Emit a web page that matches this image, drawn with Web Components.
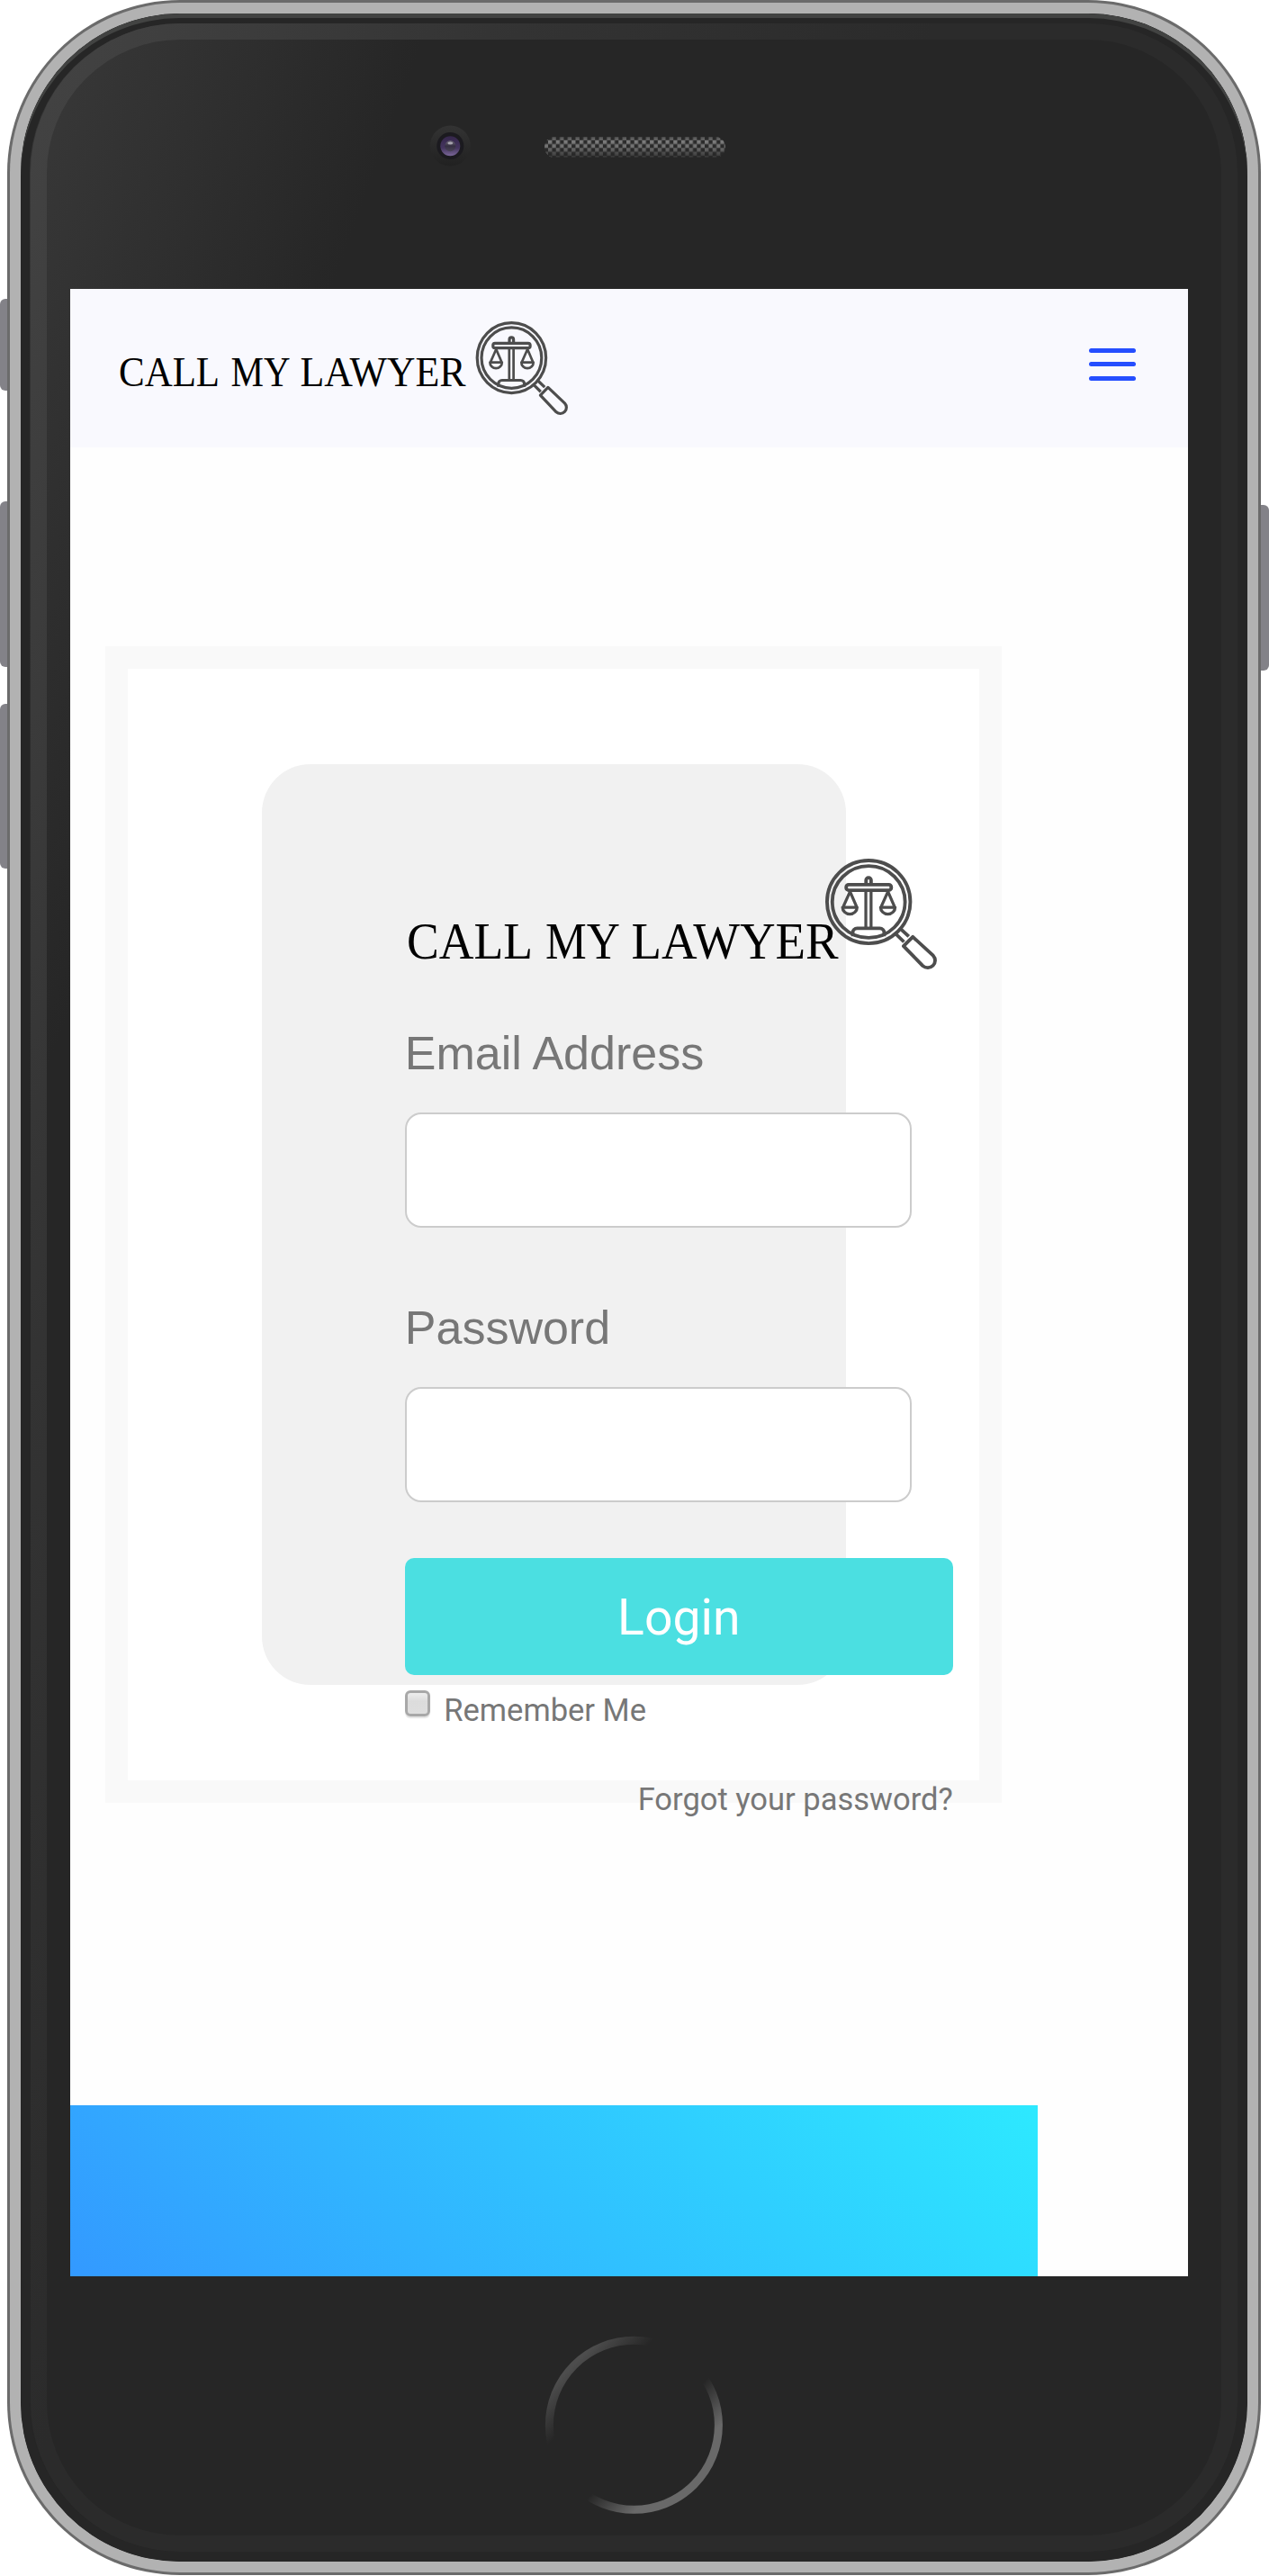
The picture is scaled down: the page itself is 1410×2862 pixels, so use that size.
<!DOCTYPE html>
<html lang="en">
<head>
<meta charset="utf-8">
<title>Call My Lawyer</title>
<style>
  html, body { margin: 0; background: #fff; }
  body { width: 1410px; height: 2862px; overflow: hidden; }
</style>
</head>
<body>
<phone-device>
  <app-header></app-header>
  <login-panel>
    <brand-logo size="large"></brand-logo>
    <text-field>Email Address</text-field>
    <text-field>Password</text-field>
    <login-button>Login</login-button>
    <remember-me>Remember Me</remember-me>
    <forgot-link>Forgot your password?</forgot-link>
  </login-panel>
  <page-footer></page-footer>
</phone-device>

<script>
const define = (name, html, setup) => {
  const tpl = document.createElement('template');
  tpl.innerHTML = html;
  customElements.define(name, class extends HTMLElement {
    constructor() {
      super();
      this.attachShadow({ mode: 'open' }).append(tpl.content.cloneNode(true));
    }
    connectedCallback() { if (setup) setup(this); }
  });
};

define('phone-device', `
<style>
  :host { display: block; position: relative; box-sizing: border-box; width: 1410px; height: 2861px; padding: 0 9px 0 8px; }
  .key { position: absolute; width: 20px; background: #838288; border-radius: 6px; }
  .edge { position: relative; box-sizing: border-box; height: 2861px; padding: 3px; border-radius: 192px; background: #6b6b6b; }
  .metal { box-sizing: border-box; height: 100%; padding: 12px; border-radius: 189px; background: #b2b2b2; }
  .glass { position: relative; box-sizing: border-box; height: 100%; border-radius: 177px; display: flex; flex-direction: column; align-items: flex-start;
    background: linear-gradient(110deg, #3a3a3a 0, #262626 430px); overflow: hidden; }
  .rim { position: absolute; inset: 0; border: solid #262626; border-width: 11px 11px 11px 10px; border-radius: 177px; box-sizing: border-box; }
  .ring { position: absolute; left: 0; top: 0; }
  .shine { position: absolute; inset: 0; border-radius: 177px; box-shadow: inset 0 5px 0 #424342; }
  svg { display: block; position: relative; }
  .screen { position: relative; width: 1242px; height: 2208px; margin-left: 55px; background: #fefefe; overflow: hidden; display: flex; flex-direction: column; flex: none; }
</style>
<div class="key" style="left:0;top:332px;height:102px"></div>
<div class="key" style="left:0;top:557px;height:184px"></div>
<div class="key" style="left:0;top:782px;height:183px"></div>
<div class="key" style="right:0;top:561px;height:184px"></div>
<div class="edge"><div class="metal"><div class="glass">
  <div class="rim"></div>
  <svg class="ring" width="1363" height="2831">
    <defs><linearGradient id="rg" gradientUnits="userSpaceOnUse" x1="0" y1="0" x2="900" y2="330">
      <stop offset="0" stop-color="#444"/><stop offset=".55" stop-color="#333"/><stop offset="1" stop-color="#2b2b2b"/></linearGradient></defs>
    <rect x="20" y="20" width="1323" height="2791" rx="157" fill="none" stroke="url(#rg)" stroke-width="18"/>
  </svg>
  <div class="shine"></div>
  <svg width="1363" height="306">
    <defs>
      <linearGradient id="cam" x1="0" y1="0" x2="0" y2="1"><stop offset="0" stop-color="#333"/><stop offset="1" stop-color="#212121"/></linearGradient>
      <linearGradient id="lens" x1="0" y1="0" x2="0" y2="1"><stop offset="0" stop-color="#35264b"/><stop offset=".6" stop-color="#45355f"/><stop offset="1" stop-color="#7a6798"/></linearGradient>
      <linearGradient id="core" x1="0" y1="0" x2="0" y2="1"><stop offset="0" stop-color="#6e6a78"/><stop offset=".5" stop-color="#352f42"/><stop offset="1" stop-color="#4b4458"/></linearGradient>
      <pattern id="mesh" patternUnits="userSpaceOnUse" x="586" y="140.7" width="8.7" height="8.7">
        <rect width="4.35" height="4.35" fill="#7c7c7c"/><rect x="4.35" y="4.35" width="4.35" height="4.35" fill="#7c7c7c"/>
      </pattern>
      <linearGradient id="fade" x1="0" y1="0" x2="0" y2="1"><stop offset="0" stop-color="#262626" stop-opacity=".6"/><stop offset=".2" stop-color="#262626" stop-opacity="0"/><stop offset=".5" stop-color="#262626" stop-opacity=".15"/><stop offset="1" stop-color="#262626" stop-opacity=".85"/></linearGradient>
    </defs>
    <circle cx="477.3" cy="147" r="22.5" fill="url(#cam)"/>
    <circle cx="477.3" cy="147" r="15" fill="#1b1a1f"/>
    <circle cx="477.3" cy="147.2" r="11" fill="url(#lens)"/>
    <circle cx="477.3" cy="147.2" r="6" fill="url(#core)"/>
    <ellipse cx="477.3" cy="144" rx="2.9" ry="1.5" fill="#a9a5b0"/>
    <rect x="582" y="137" width="201" height="23" rx="11.5" fill="#2b2b2b"/>
    <rect x="582" y="137" width="201" height="23" rx="11.5" fill="url(#mesh)"/>
    <rect x="582" y="137" width="201" height="23" rx="11.5" fill="url(#fade)"/>
  </svg>
  <div class="screen"><slot></slot></div>
  <svg width="1363" height="316">
    <defs><linearGradient id="home" gradientUnits="userSpaceOnUse" x1="614.5" y1="98.5" x2="748.5" y2="232.5">
      <stop offset="0" stop-color="#4d4d4d"/><stop offset=".225" stop-color="#4d4d4d" stop-opacity="0"/>
      <stop offset=".61" stop-color="#696969" stop-opacity="0"/><stop offset=".86" stop-color="#696969"/></linearGradient></defs>
    <circle cx="681.4" cy="165.3" r="94" fill="none" stroke="url(#home)" stroke-width="9"/>
  </svg>
</div></div></div>
`);

define('brand-logo', `
<style>
  :host { display: block; line-height: 0; }
  :host([size="large"]) { margin-left: 3.5px; }
  svg { display: block; overflow: visible; }
  text { font-family: "Liberation Serif", serif; fill: #000; }
</style>
<svg class="logo">
  <text><tspan>CALL</tspan> <tspan>MY</tspan> <tspan>LAWYER</tspan></text>
  <svg class="mark" viewBox="0 0 102 104.5" preserveAspectRatio="none" fill="none" stroke="#4d4d4d" stroke-width="3.2" stroke-linejoin="round">
    <ellipse cx="39.8" cy="40.7" rx="38.2" ry="39"/>
    <ellipse cx="39.8" cy="40.7" rx="33.4" ry="33.8"/>
    <path d="M37.4 24V20.4a2.3 2.5 0 0 1 4.6 0V24"/>
    <rect x="19.2" y="24.4" width="41.3" height="5.3" rx="2.2"/>
    <path d="M37.2 30V65M42 30V65" stroke-width="2.7"/>
    <path d="M25.2 73V69.6a4 4 0 0 1 4-4H50a4 4 0 0 1 4 4V73"/>
    <path d="M22.7 31L16.2 45.8M22.7 31L29 45.8M15.8 45.8H29.2a6.7 6.5 0 0 1-13.4 0Z" stroke-width="2.7"/>
    <path d="M57.5 31L51 45.8M57.5 31L63.8 45.8M50.7 45.8H64.1a6.7 6.5 0 0 1-13.4 0Z" stroke-width="2.7"/>
    <path d="M69.4 66.4L76.6 73.2M64.8 71L72.2 78.4"/>
    <path d="M80.3 73.6L71.8 82.3L89.5 101A6.8 6.8 0 0 0 99 91.3Z"/>
  </svg>
</svg>
`, el => {
  const large = el.getAttribute('size') === 'large';
  const m = large
    ? { w: 588, h: 123.3, font: 57, base: 110.6, words: [[-1, 138], [153, 81], [248.5, 230]], x: 464, mw: 123.5 }
    : { w: 498, h: 104.3, font: 45.5, base: 72.3, words: [[-1, 110.5], [123.5, 64.5], [200.5, 184]], x: 395.6, mw: 102 };
  const root = el.shadowRoot;
  const set = (n, o) => Object.entries(o).forEach(([k, v]) => n.setAttribute(k, v));
  set(root.querySelector('.logo'), { width: m.w, height: m.h });
  set(root.querySelector('.mark'), { x: m.x, y: 0, width: m.mw, height: m.h });
  set(root.querySelector('text'), { y: m.base, 'font-size': m.font });
  root.querySelectorAll('tspan').forEach((t, i) =>
    set(t, { x: m.words[i][0], textLength: m.words[i][1], lengthAdjust: 'spacingAndGlyphs' }));
});

define('app-header', `
<style>
  :host { display: flex; box-sizing: border-box; height: 176px; flex: none; padding: 35.7px 58px 0 55.4px; justify-content: space-between; align-items: flex-start; background: #f9f9fe; }
  .menu { display: flex; flex-direction: column; gap: 10.5px; width: 52px; padding-top: 30.3px; }
  .menu i { height: 5px; border-radius: 2.5px; background: #254eff; }
</style>
<brand-logo></brand-logo>
<div class="menu"><i></i><i></i><i></i></div>
`);

define('login-panel', `
<style>
  :host { display: block; box-sizing: border-box; flex: none; width: 996px; height: 1285px; margin: 221px 0 0 39.3px; border: 25.7px solid #f9f9f9; padding: 106px 0 0 149px; background: #fff; }
  .card { box-sizing: border-box; width: 648.5px; height: 1023px; border-radius: 54px; background: #f1f1f1; padding: 105.2px 0 0 158.5px; }
  .form { display: flex; flex-direction: column; width: 609px; }
</style>
<div class="card"><div class="form"><slot></slot></div></div>
`);

define('text-field', `
<style>
  :host { display: flex; flex-direction: column; gap: 37px; margin-top: 64px; }
  :host(:nth-of-type(2)) { margin-top: 81.5px; }
  label { font: 52px/58px "Liberation Sans", sans-serif; color: #777; }
  .box { box-sizing: border-box; width: 563px; height: 128px; border: 2px solid #ccc; border-radius: 18px; background: #fff; }
</style>
<label><slot></slot></label><div class="box"></div>
`);

define('login-button', `
<style>
  :host { display: flex; align-items: center; justify-content: center; box-sizing: border-box; margin-top: 62.5px; height: 129.5px; padding-top: 3px; border-radius: 10px; background: #4bdfe1; font: 55.3px/65px Roboto, sans-serif; color: #fff; }
</style>
<slot></slot>
`);

define('remember-me', `
<style>
  :host { display: flex; gap: 15px; height: 46px; margin-top: 17px; align-items: flex-start; font: 34.5px/40px Roboto, sans-serif; color: #777; }
  i { box-sizing: border-box; width: 28.5px; height: 29px; border: 3px solid #a8a8a8; border-radius: 6px; background: linear-gradient(#eee, #dcdcdc 40%, #dedede); box-shadow: 0 2px 1px #e4e4e4; }
  span { padding-top: 2px; white-space: nowrap; }
</style>
<i></i><span><slot></slot></span>
`);

define('forgot-link', `
<style>
  :host { display: block; margin-top: 55px; text-align: right; white-space: nowrap; font: 34.5px/40px Roboto, sans-serif; color: #777; }
</style>
<slot></slot>
`);

define('page-footer', `
<style>
  :host { display: block; flex: none; width: 1075px; height: 190px; margin-top: auto; background: linear-gradient(45deg, #39f 0%, #2de9ff 100%); }
</style>
`);
</script>
</body>
</html>
